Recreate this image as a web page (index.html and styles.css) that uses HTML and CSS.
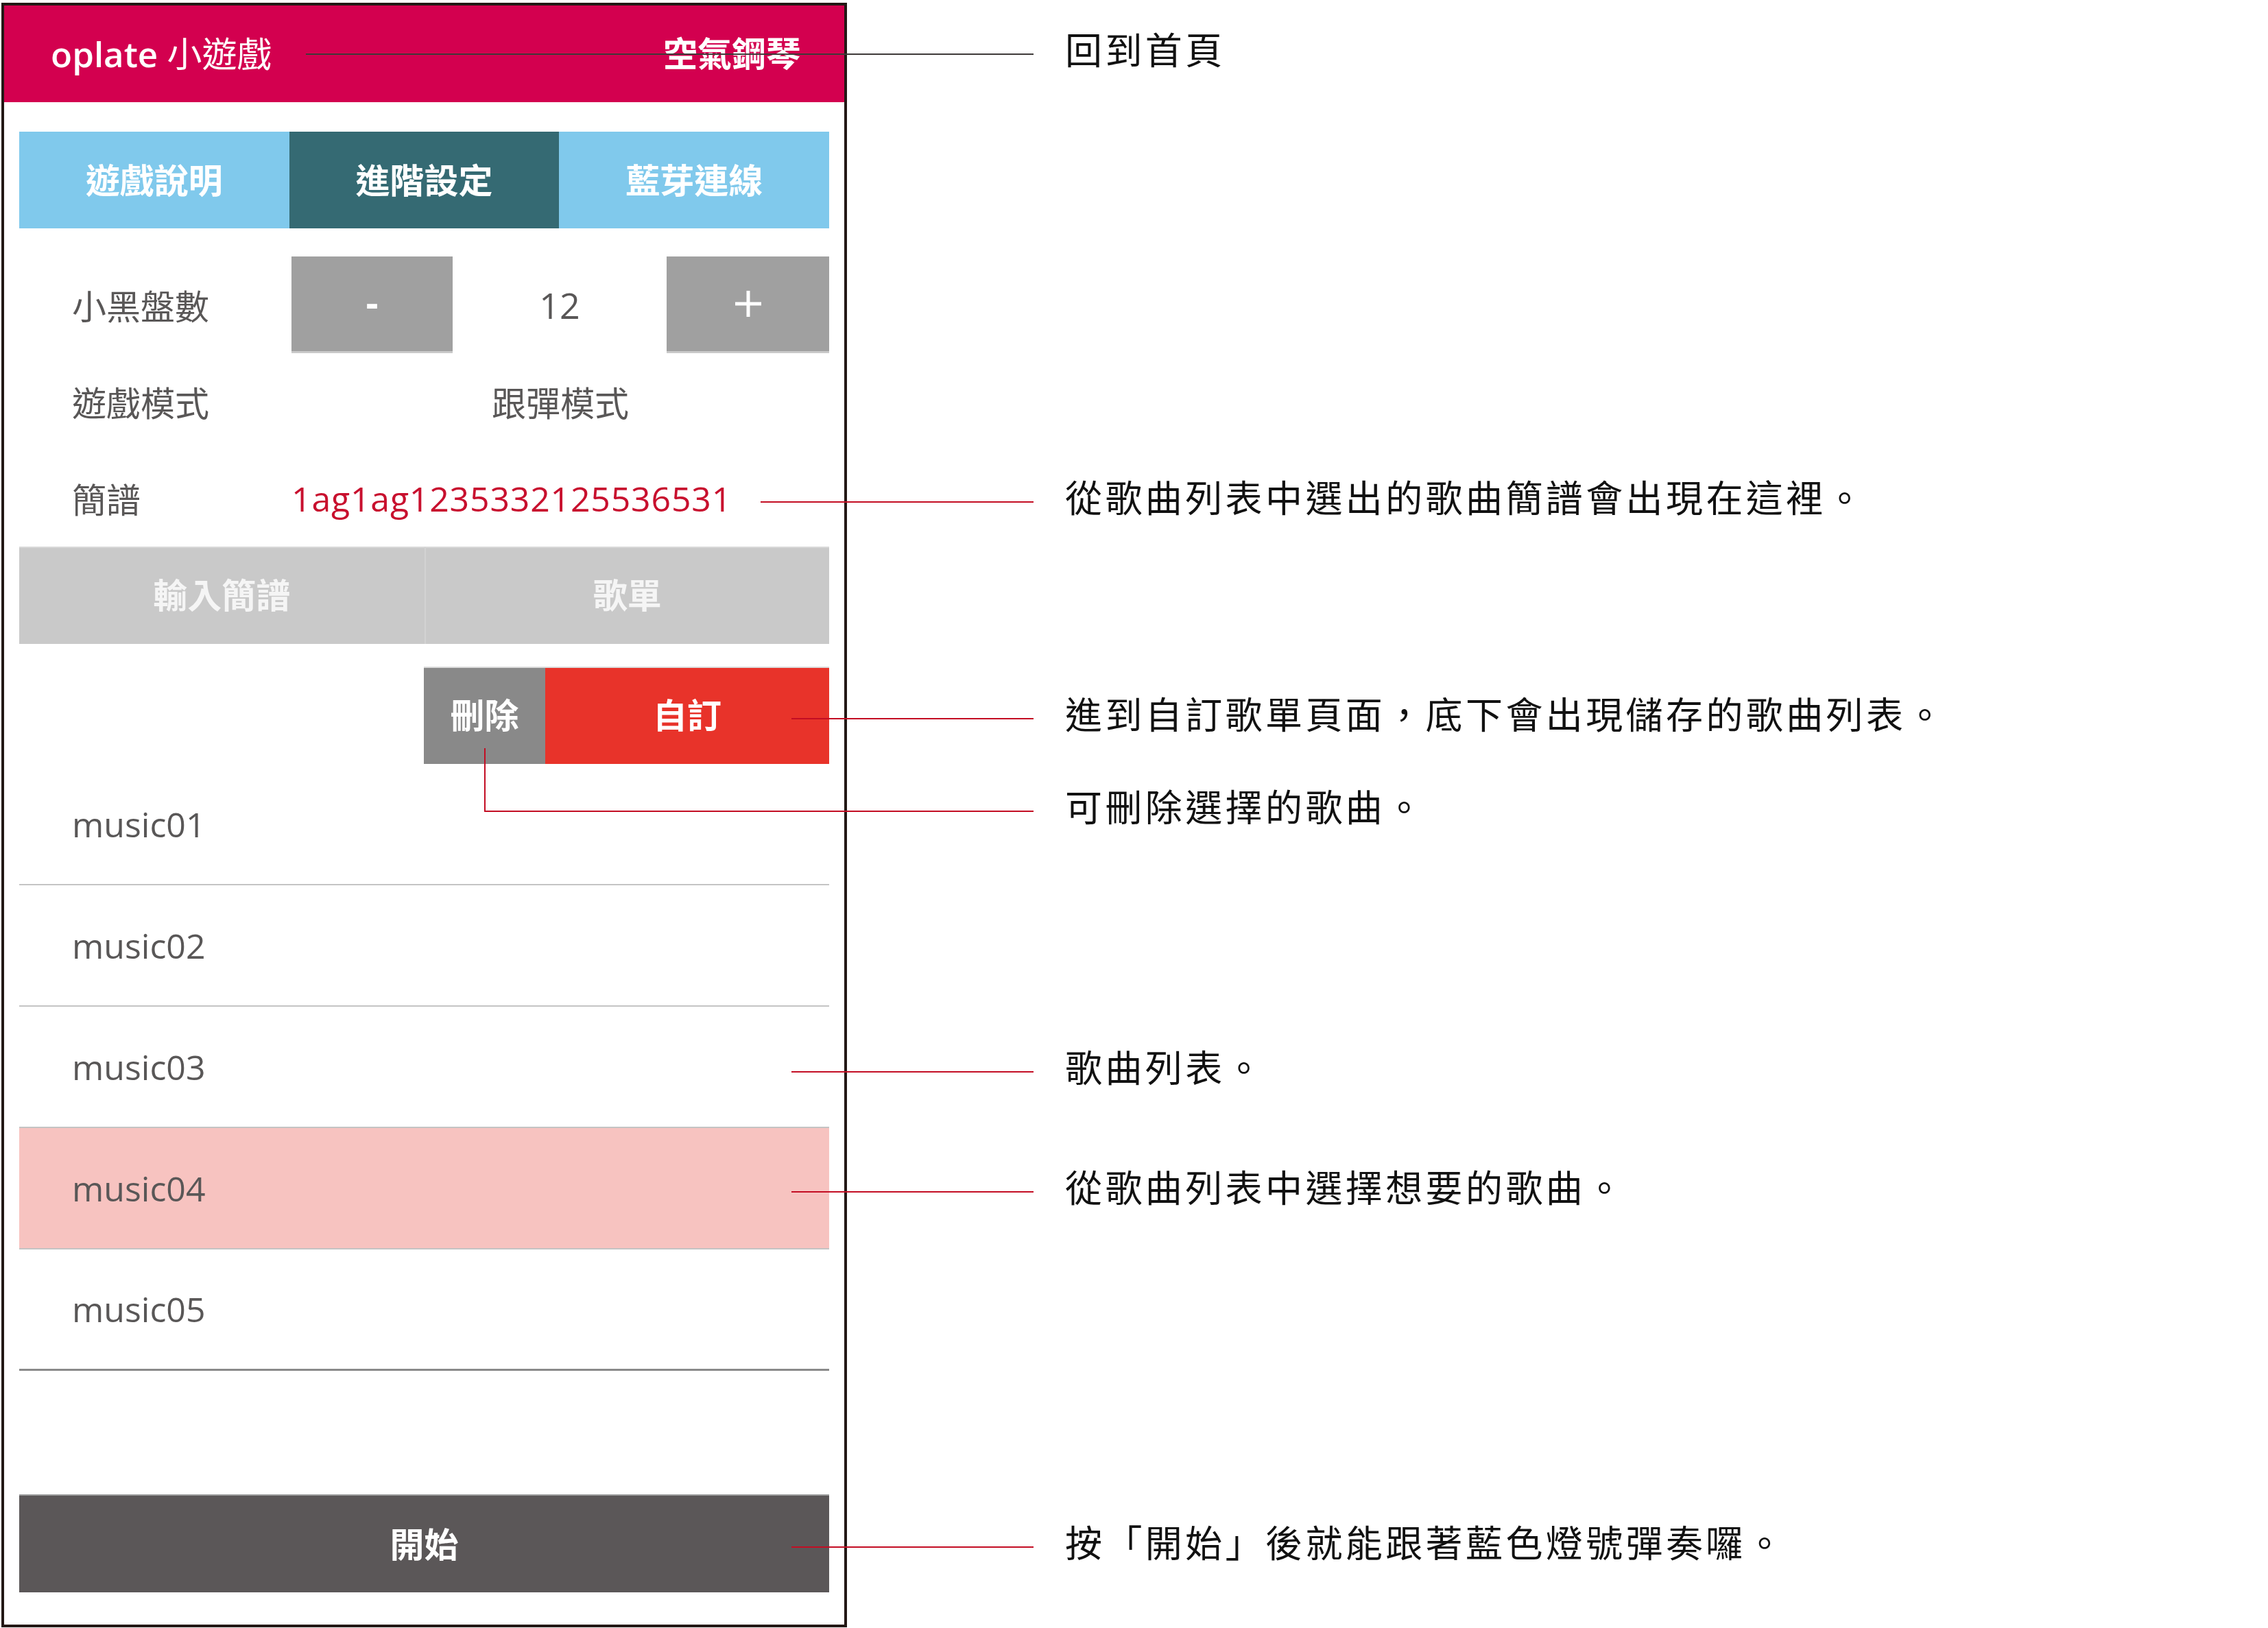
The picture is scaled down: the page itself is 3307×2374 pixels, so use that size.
FILE: index.html
```html
<!DOCTYPE html>
<html lang="zh-Hant">
<head>
    <meta charset="UTF-8">
    <title>oplate 小遊戲 - 進階設定說明</title>
    <link rel="stylesheet" href="styles.css">
</head>
<body>
    <div class="sheet">
        <!-- Phone screen -->
        <div class="phone">
            <header class="app-bar">
                <span class="app-title"><span class="brand">oplate</span> 小遊戲</span>
                <span class="app-home">空氣鋼琴</span>
            </header>

            <div class="content">
                <nav class="tabs">
                    <div class="tab">遊戲說明</div>
                    <div class="tab active">進階設定</div>
                    <div class="tab">藍芽連線</div>
                </nav>

                <div class="setting-row first">
                    <div class="label">小黑盤數</div>
                    <div class="stepper">
                        <button class="step-btn step-minus">-</button>
                        <span class="step-value">12</span>
                        <button class="step-btn step-plus">
                            <svg width="38" height="38" viewBox="0 0 38 38">
                                <rect x="16.5" y="0" width="5" height="38" fill="#fff"/>
                                <rect x="0" y="16.5" width="38" height="5" fill="#fff"/>
                            </svg>
                        </button>
                    </div>
                </div>
                <div class="setting-row">
                    <div class="label">遊戲模式</div>
                    <div class="setting-value centered">跟彈模式</div>
                </div>
                <div class="setting-row">
                    <div class="label">簡譜</div>
                    <div class="setting-value notation">1ag1ag1235332125536531</div>
                </div>

                <div class="source-tabs">
                    <button class="source-tab">輸入簡譜</button>
                    <button class="source-tab">歌單</button>
                </div>

                <div class="list-actions">
                    <button class="delete-btn">刪除</button>
                    <button class="custom-btn">自訂</button>
                </div>

                <ul class="song-list">
                    <li class="song">music01</li>
                    <li class="song">music02</li>
                    <li class="song">music03</li>
                    <li class="song selected">music04</li>
                    <li class="song">music05</li>
                </ul>

                <button class="start-btn">開始</button>
            </div>
        </div>

        <!-- Callouts -->
        <div class="callout callout-home">
            <div class="callout-line dark"></div>
            <div class="callout-text">回到首頁</div>
        </div>
        <div class="callout callout-notation">
            <div class="callout-line"></div>
            <div class="callout-text">從歌曲列表中選出的歌曲簡譜會出現在這裡。</div>
        </div>
        <div class="callout callout-custom">
            <div class="callout-line"></div>
            <div class="callout-text">進到自訂歌單頁面，底下會出現儲存的歌曲列表。</div>
        </div>
        <div class="callout-elbow"></div>
        <div class="callout callout-delete">
            <div class="callout-line"></div>
            <div class="callout-text">可刪除選擇的歌曲。</div>
        </div>
        <div class="callout callout-list">
            <div class="callout-line"></div>
            <div class="callout-text">歌曲列表。</div>
        </div>
        <div class="callout callout-select">
            <div class="callout-line"></div>
            <div class="callout-text">從歌曲列表中選擇想要的歌曲。</div>
        </div>
        <div class="callout callout-start">
            <div class="callout-line"></div>
            <div class="callout-text">按「開始」後就能跟著藍色燈號彈奏囉。</div>
        </div>
    </div>
</body>
</html>
```

FILE: styles.css
```css
* {
    margin: 0;
    padding: 0;
    box-sizing: border-box;
}

body {
    font-family: "Open Sans", "Noto Sans CJK TC", sans-serif;
    background-color: #fff;
    width: 3307px;
    height: 2374px;
    overflow: hidden;
}

button {
    font-family: inherit;
    border: none;
    cursor: pointer;
}

.sheet {
    position: relative;
    height: 100%;
}

/* Phone screen */
.phone {
    width: 1233px;
    height: 2369px;
    margin: 4px 0 0 2px;
    border: 4px solid #231815;
    display: flex;
    flex-direction: column;
}

.app-bar {
    height: 141px;
    flex-shrink: 0;
    background-color: #d3004f;
    color: #fff;
    font-size: 50px;
    display: flex;
    align-items: center;
    justify-content: space-between;
    padding: 0 64px 6px 68px;
}

.app-title {
    font-size: 51px;
}

.brand {
    font-weight: 600;
}

.app-home {
    font-weight: bold;
}

.content {
    padding: 43px 22px 0;
    display: flex;
    flex-direction: column;
}

.tabs {
    display: grid;
    grid-template-columns: repeat(3, 1fr);
    height: 141px;
}

.tab {
    background-color: #80c9ec;
    color: #fff;
    font-size: 50px;
    font-weight: bold;
    display: flex;
    align-items: center;
    justify-content: center;
    padding-bottom: 4px;
}

.tab.active {
    background-color: #356a73;
}

.setting-row {
    display: grid;
    grid-template-columns: 397px 1fr;
    align-items: center;
    height: 141px;
    font-size: 50px;
    color: #595757;
}

.setting-row.first {
    margin-top: 41px;
}

.label {
    padding-left: 77px;
}

.stepper {
    display: grid;
    grid-template-columns: 235px 1fr 237px;
    height: 141px;
}

.step-btn {
    background-color: #a0a0a0;
    border-bottom: 3px solid #c9c9c9;
    color: #fff;
    display: flex;
    align-items: center;
    justify-content: center;
}

.step-minus {
    font-size: 56px;
    font-weight: bold;
    padding-bottom: 6px;
}

.step-value {
    display: flex;
    align-items: center;
    justify-content: center;
    font-size: 52px;
}

.centered {
    text-align: center;
}

.notation {
    color: #c8102e;
    letter-spacing: 0.8px;
}

.source-tabs {
    display: grid;
    grid-template-columns: 1fr 1fr;
    height: 142px;
}

.source-tab {
    background-color: #c9c9c9;
    border-top: 2px solid #d9d9d9;
    color: #f5f5f5;
    font-size: 50px;
    font-weight: bold;
    padding-bottom: 8px;
}

.source-tab + .source-tab {
    border-left: 2px solid #d2d2d2;
}

.list-actions {
    margin-top: 33px;
    height: 142px;
    display: flex;
    justify-content: flex-end;
}

.delete-btn,
.custom-btn {
    color: #fff;
    font-size: 50px;
    font-weight: bold;
    border-top: 2px solid #dcdcdc;
    padding-bottom: 8px;
}

.delete-btn {
    width: 177px;
    background-color: #898989;
}

.custom-btn {
    width: 414px;
    background-color: #e8332a;
}

.song-list {
    list-style: none;
}

.song {
    height: 177px;
    padding-left: 77px;
    display: flex;
    align-items: center;
    font-size: 50px;
    color: #595757;
    border-bottom: 2px solid #c4c4c4;
}

.song.selected {
    background-color: #f7c3c0;
}

.song:last-child {
    border-bottom: 3px solid #8a8a8a;
}

.start-btn {
    margin-top: 180px;
    height: 143px;
    background-color: #5b5758;
    border-top: 2px solid #a0a0a0;
    color: #fff;
    font-size: 50px;
    font-weight: bold;
    padding-bottom: 5px;
}

/* Callouts */
.callout {
    position: absolute;
    height: 80px;
    display: flex;
    align-items: center;
    gap: 46px;
}

.callout-line {
    height: 2px;
    width: 353px;
    background-color: #c30d23;
}

.callout-line.dark {
    background-color: #3e3a39;
}

.callout-text {
    font-family: "Noto Sans CJK TC", sans-serif;
    font-size: 54px;
    line-height: 80px;
    letter-spacing: 4.4px;
    color: #111;
    white-space: nowrap;
    margin-bottom: 16px;
}

.callout-home {
    left: 446px;
    top: 35px;
}

.callout-home .callout-line {
    width: 1061px;
}

.callout-notation {
    left: 1109px;
    top: 688px;
}

.callout-notation .callout-line {
    width: 398px;
}

.callout-custom {
    left: 1154px;
    top: 1004px;
}

.callout-delete {
    left: 706px;
    top: 1139px;
}

.callout-delete .callout-line {
    width: 801px;
}

.callout-elbow {
    position: absolute;
    left: 706px;
    top: 1087px;
    width: 2px;
    height: 93px;
    background-color: #c30d23;
}

.callout-list {
    left: 1154px;
    top: 1519px;
}

.callout-select {
    left: 1154px;
    top: 1694px;
}

.callout-start {
    left: 1154px;
    top: 2212px;
}
```
